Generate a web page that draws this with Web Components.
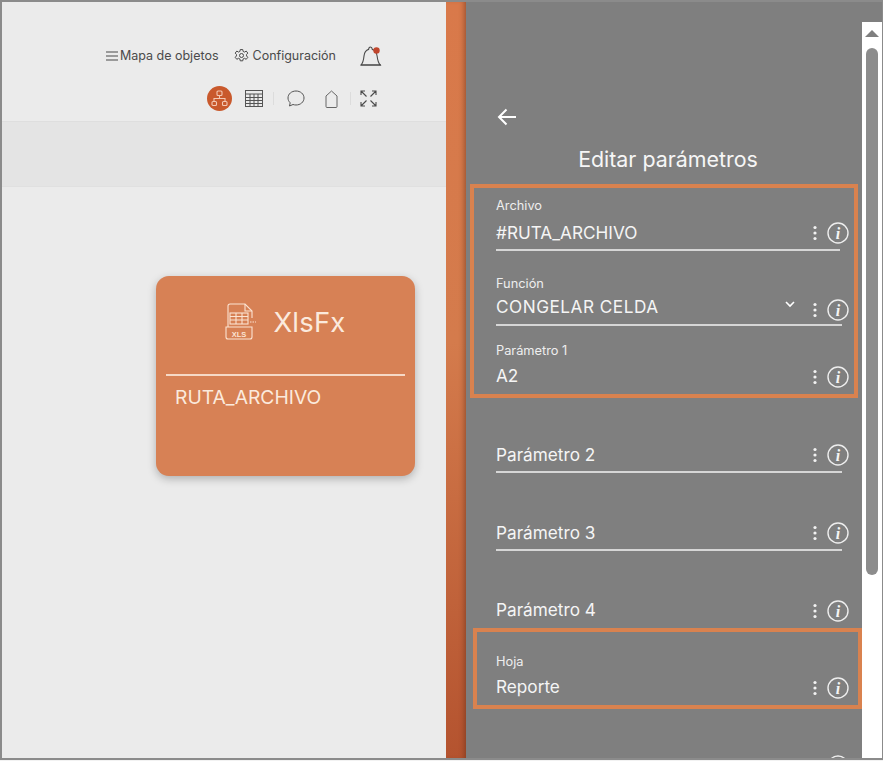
<!DOCTYPE html>
<html lang="es">
<head>
<meta charset="utf-8">
<title>Editar parámetros</title>
<style>
  html, body { margin: 0; height: 100%; overflow: hidden; background: #f2f2f2; }
  body { font-family: "Inter", "Liberation Sans", sans-serif; }
</style>
</head>
<body>
<app-frame>
  <flow-canvas slot="left"></flow-canvas>
  <param-panel slot="right">
    <param-box>
      <param-field label="Archivo" value="#RUTA_ARCHIVO" line="344" style="--top:10px;--gap:7px;--line-gap:4px"></param-field>
      <param-field label="Función" value="CONGELAR CELDA" select line="346" style="--top:25px;--gap:3px;--value-ls:.5px;--icon-y:6px"></param-field>
      <param-field label="Parámetro 1" value="A2" style="--top:17px;--gap:5px;--bottom:6px;--icon-y:2px"></param-field>
    </param-box>
    <param-field value="Parámetro 2" line="346" style="--top:45px;--line-gap:4px"></param-field>
    <param-field value="Parámetro 3" line="346" style="--top:48px;--line-gap:4px"></param-field>
    <param-field value="Parámetro 4" style="--top:47px;--bottom:6px;--icon-y:2px"></param-field>
    <param-box alt>
      <param-field label="Hoja" value="Reporte" style="--top:22px;--gap:5px;--bottom:6px;--icon-y:2px"></param-field>
    </param-box>
    <param-field value="Adelin" select style="--top:45px"></param-field>
  </param-panel>
</app-frame>

<template id="app-frame-tpl">
  <style>
    :host { display: flex; width: 883px; height: 760px; box-sizing: border-box; border: 2px solid #8b8b8b; border-right-width: 1px; overflow: hidden; background: #ebebeb; }
    .left { width: 444px; flex: none; }
    .strip { width: 20px; flex: none; background: linear-gradient(180deg, #d9794a 0, #d47b4c 45%, #b4532f 100%); box-shadow: inset -5px 0 5px -3px rgba(90,40,20,.45); }
    .right { flex: 1; min-width: 0; }
  </style>
  <div class="left"><slot name="left"></slot></div>
  <div class="strip"></div>
  <div class="right"><slot name="right"></slot></div>
</template>

<template id="flow-canvas-tpl">
  <style>
    :host { display: flex; flex-direction: column; height: 100%; color: #4a4a4a; font-size: 12.5px; }
    .menu { height: 107px; box-sizing: border-box; padding: 42px 62px 0 0; display: flex; flex-direction: column; align-items: flex-end; }
    .row { display: flex; align-items: center; justify-content: flex-end; }
    .item { display: flex; align-items: center; gap: 2px; }
    .item + .item { margin-left: 15px; gap: 4px; }
    .bell { margin-left: 24px; margin-right: 1px; }
    .tools { display: flex; align-items: center; justify-content: flex-end; margin-top: 19px; margin-right: 7px; height: 26px; }
    .active { width: 25px; height: 25px; border-radius: 50%; background: #c9592c; display: flex; align-items: center; justify-content: center; }
    .sep { width: 1px; height: 13px; background: #dcdcdc; }
    .band { height: 66px; background: #e4e4e4; border-top: 1px solid #dedede; border-bottom: 1px solid #e0e0e0; box-sizing: border-box; margin-top: 12px; }
    .stage { flex: 1; display: flex; justify-content: flex-end; padding: 89px 31px 0 0; }
    svg { display: block; }
  </style>
  <div class="menu">
    <div class="row">
      <div class="item">
        <svg width="12" height="10" viewBox="0 0 12 10" stroke="#4a4a4a" stroke-width="1.2"><path d="M0 1h12M0 5h12M0 9h12"/></svg>
        Mapa de objetos
      </div>
      <div class="item">
        <svg width="15" height="15" viewBox="0 0 24 24" fill="none" stroke="#4a4a4a" stroke-width="1.6"><circle cx="12" cy="12" r="3.2"/><path d="M10 2.5h4l.6 3 2.2 1 2.7-1.6 2.6 3.2-2 2.2v2.4l2 2.2-2.6 3.2-2.7-1.6-2.2 1-.6 3h-4l-.6-3-2.2-1-2.7 1.6-2.6-3.2 2-2.2v-2.4l-2-2.2 2.6-3.2 2.7 1.6 2.2-1z"/></svg>
        Configuración
      </div>
      <div class="bell">
        <svg width="23" height="23" viewBox="0 0 23 23" fill="none" stroke="#4a4a4a" stroke-width="1.1"><path d="M1 21c2.2-2.2 2.6-5 3-9 .4-3.5 2.5-6 4.6-6.6.3-3.2 3.3-3.2 3.7 0 2.5.7 4.3 3.1 4.8 6.6.5 4 .9 6.8 3.1 9z"/><path d="M1 21h20"/><circle cx="16.5" cy="6.5" r="3.2" fill="#c0452c" stroke="none"/></svg>
      </div>
    </div>
    <div class="tools">
      <div class="active">
        <svg width="17" height="17" viewBox="0 0 17 17" fill="none" stroke="#f3c9b4" stroke-width="1.1"><rect x="6" y="1" width="5" height="4.5" rx="1"/><path d="M8.5 5.5v3M3 11.5v-3h11v3"/><rect x="1" y="11.5" width="4.5" height="4" rx="1"/><rect x="11.5" y="11.5" width="4.5" height="4" rx="1"/></svg>
      </div>
      <svg style="margin-left:13px" width="18" height="17" viewBox="0 0 18 17" fill="none" stroke="#555" stroke-width="1"><rect x=".5" y=".5" width="17" height="16"/><path d="M.5 4h17M.5 7.5h17M.5 10.5h17M.5 13.5h17M5 4v12.5M9 4v12.5M13 4v12.5"/></svg>
      <div class="sep" style="margin:0 13px 0 10px"></div>
      <svg width="18" height="17" viewBox="0 0 18 17" fill="none" stroke="#555" stroke-width="1"><path d="M9 1c4.4 0 8 2.9 8 7s-3.6 7-8 7c-1 0-2-.2-3-.5L2.5 16l.7-3.2C1.8 11.5 1 9.8 1 8c0-4.100 3.600-7 8-7z"/></svg>
      <svg style="margin-left:20px" width="13" height="18" viewBox="0 0 13 18" fill="none" stroke="#666" stroke-width="1"><path d="M6.5 1 12 6v10.5a1 1 0 0 1-1 1H2a1 1 0 0 1-1-1V6z"/></svg>
      <div class="sep" style="margin:0 9px 0 12px"></div>
      <svg width="17" height="17" viewBox="0 0 17 17" fill="none" stroke="#4a4a4a" stroke-width="1.1"><path d="M1 1l5.5 5.5M16 1l-5.5 5.5M1 16l5.5-5.5M16 16l-5.5-5.5M1 5V1h4M12 1h4v4M1 12v4h4M16 12v4h-4"/></svg>
    </div>
  </div>
  <div class="band"></div>
  <div class="stage"><xls-card title="XlsFx" text="RUTA_ARCHIVO"></xls-card></div>
</template>

<template id="xls-card-tpl">
  <style>
    :host { display: block; width: 259px; height: 200px; box-sizing: border-box; background: #d78155; border-radius: 13px; box-shadow: 0 3px 8px rgba(0,0,0,.25); color: #fbeadd; padding: 0 10px; }
    .head { height: 100px; box-sizing: border-box; display: flex; align-items: center; justify-content: center; gap: 16px; border-bottom: 2px solid #f6d9c6; padding-bottom: 6px; }
    .name { font-size: 27.5px; letter-spacing: .2px; }
    .body { padding: 9px 9px; font-size: 19.3px; }
    svg { display: block; }
  </style>
  <div class="head">
    <svg width="32" height="38" viewBox="0 0 32 38" fill="none" stroke="#fbe3d2" stroke-width="1.1">
      <path d="M3 24V3a2 2 0 0 1 2-2h15l7 7v7"/><path d="M20 1v7h7"/>
      <rect x="5" y="10" width="18" height="11"/><path d="M5 13.5h18M5 17h18M11 10v11M17 10v11"/>
      <path d="M1 24h26v10a2 2 0 0 1-2 2H3a2 2 0 0 1-2-2z"/>
      <path d="M25 19h6" stroke-dasharray="1.5 1"/>
      <text x="14" y="33.5" fill="#fbe3d2" stroke="none" font-size="7.5" font-weight="700" text-anchor="middle" font-family="Liberation Sans">XLS</text>
    </svg>
    <span class="name"></span>
  </div>
  <div class="body"></div>
</template>

<template id="param-panel-tpl">
  <style>
    :host { display: block; position: relative; height: 100%; background: #7f7f7f; overflow: hidden; color: #fff; box-sizing: border-box; --pad: 30px; }
    .back { padding: 106px 0 0 31px; height: 36px; }
    h1 { margin: 0; width: 404px; font-weight: 400; font-size: 21.4px; text-align: center; line-height: 24px; padding: 3px 0 1px 0; color: #f6f6f6; }
    .content { margin-top: 12px; }
    .bar { position: absolute; top: 20px; right: 0; bottom: 0; width: 20px; background: #fff; display: flex; flex-direction: column; align-items: center; }
    .bar i { display: block; width: 0; height: 0; border: 7px solid transparent; border-bottom: 7px solid #7f7f7f; border-top: 0; margin-top: 8px; }
    .bar b { display: block; width: 12px; height: 527px; margin-top: 11px; background: #8c8c8c; border-radius: 6px; }
    svg { display: block; }
  </style>
  <div class="back">
    <svg width="20" height="18" viewBox="0 0 20 18" fill="none" stroke="#fff" stroke-width="2"><path d="M19 9H2M9.5 1.5 2 9l7.5 7.5"/></svg>
  </div>
  <h1>Editar parámetros</h1>
  <div class="content"><slot></slot></div>
  <div class="bar"><i></i><b></b></div>
</template>

<template id="param-box-tpl">
  <style>
    :host { display: block; box-sizing: border-box; width: 388px; margin-left: 4px; border: 4px solid #d9824f; --pad: 22px; }
    :host([alt]) { margin-left: 7px; width: 389px; --pad: 19px; }
  </style>
  <slot></slot>
</template>

<template id="param-field-tpl">
  <style>
    :host { display: block; box-sizing: border-box; padding: var(--top, 0) 0 var(--bottom, 0) var(--pad, 30px); }
    .label { display: block; font-size: 12.8px; line-height: 16px; color: #eee; margin-bottom: var(--gap, 0); }
    .row { width: 353px; height: 24px; display: flex; align-items: center; }
    .value { flex: 1; font-size: 17.2px; line-height: 24px; color: #f5f5f5; letter-spacing: var(--value-ls, 0); white-space: nowrap; }
    .chev { margin: -5px 18px 0 0; }
    .dots { margin: var(--icon-y, 0) 10px 0 0; }
    .info { margin-top: var(--icon-y, 0); }
    .line { height: 2px; margin-top: var(--line-gap, 5px); background: #d6d6d6; }
    svg { display: block; flex: none; }
  </style>
  <span class="label"></span>
  <div class="row">
    <span class="value"></span>
    <svg class="chev" width="10" height="7" viewBox="0 0 10 7" fill="none" stroke="#fff" stroke-width="1.6"><path d="M1 1l4 4 4-4"/></svg>
    <svg class="dots" width="4" height="16" viewBox="0 0 4 16" fill="#f2f2f2"><circle cx="2" cy="2.5" r="1.6"/><circle cx="2" cy="8" r="1.6"/><circle cx="2" cy="13.5" r="1.6"/></svg>
    <svg class="info" width="22" height="22" viewBox="0 0 22 22" fill="none"><circle cx="11" cy="11" r="10" stroke="#eee" stroke-width="1.4"/><text x="11" y="16.5" text-anchor="middle" font-family="Liberation Serif" font-style="italic" font-weight="700" font-size="16" fill="#f5f5f5">i</text></svg>
  </div>
  <div class="line"></div>
</template>

<script>
  function fromTemplate(el, id){
    const shadow = el.attachShadow({mode: 'open'});
    shadow.appendChild(document.getElementById(id).content.cloneNode(true));
    return shadow;
  }

  class AppFrame extends HTMLElement {
    constructor(){ super(); fromTemplate(this, 'app-frame-tpl'); }
  }
  class FlowCanvas extends HTMLElement {
    constructor(){ super(); fromTemplate(this, 'flow-canvas-tpl'); }
  }
  class XlsCard extends HTMLElement {
    constructor(){ super(); this.shadow = fromTemplate(this, 'xls-card-tpl'); }
    connectedCallback(){
      this.shadow.querySelector('.name').textContent = this.getAttribute('title');
      this.shadow.querySelector('.body').textContent = this.getAttribute('text');
    }
  }
  class ParamPanel extends HTMLElement {
    constructor(){ super(); fromTemplate(this, 'param-panel-tpl'); }
  }
  class ParamBox extends HTMLElement {
    constructor(){ super(); fromTemplate(this, 'param-box-tpl'); }
  }
  class ParamField extends HTMLElement {
    constructor(){ super(); this.shadow = fromTemplate(this, 'param-field-tpl'); }
    connectedCallback(){
      const $ = s => this.shadow.querySelector(s);
      $('.value').textContent = this.getAttribute('value');
      if(this.hasAttribute('label')) $('.label').textContent = this.getAttribute('label');
      else $('.label').remove();
      if(!this.hasAttribute('select')) $('.chev').remove();
      if(this.hasAttribute('line')) $('.line').style.width = this.getAttribute('line') + 'px';
      else $('.line').remove();
    }
  }
  customElements.define('app-frame', AppFrame);
  customElements.define('flow-canvas', FlowCanvas);
  customElements.define('xls-card', XlsCard);
  customElements.define('param-panel', ParamPanel);
  customElements.define('param-box', ParamBox);
  customElements.define('param-field', ParamField);
</script>
</body>
</html>
